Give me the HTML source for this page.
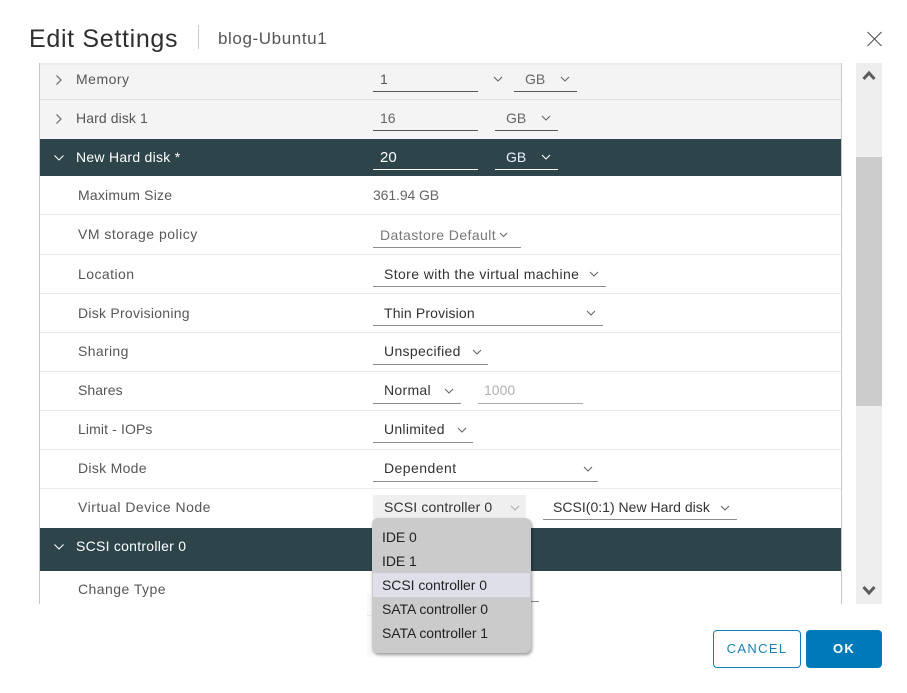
<!DOCTYPE html>
<html><head><meta charset="utf-8"><style>
html,body{margin:0;padding:0;width:907px;height:693px;overflow:hidden;background:#fff}
body{position:relative;font-family:"Liberation Sans",sans-serif;font-size:14px;color:#565656}
.a,.t,.l,.u,svg{position:absolute}
.t{white-space:nowrap;line-height:18px;height:18px}
.u{height:1px;background:#8c8c8c}
.l{left:40px;width:801px;height:1px;background:#eaeaea}
.w{color:#fff}
.d{color:#333}
svg.c{width:12px;height:8px;fill:none;stroke:#666;stroke-width:1.1}
svg.c.w2{stroke:#fff}
.m{font-size:14px;color:#222;left:382px;letter-spacing:-.05px}
</style></head><body>
<div class="t" style="left:29px;top:24px;font-size:25px;line-height:30px;height:30px;color:#2f2f2f;letter-spacing:.68px">Edit Settings</div>
<div class="a" style="left:198px;top:25px;width:1px;height:24px;background:#ccc"></div>
<div class="t" style="left:218px;top:29px;font-size:17px;line-height:20px;height:20px;color:#565656;letter-spacing:.6px">blog-Ubuntu1</div>
<svg style="left:866px;top:31px" width="17" height="16"><path d="M1.5 1L15.5 15M15.5 1L1.5 15" stroke="#555" stroke-width="1.1" fill="none"/></svg>

<div class="a" style="left:39px;top:63px;width:1px;height:541px;background:#c8c8c8"></div>
<div class="a" style="left:841px;top:63px;width:1px;height:541px;background:#c8c8c8"></div>
<div class="a" style="left:40px;top:63px;width:801px;height:2px;background:#ececec"></div>
<div class="a" style="left:40px;top:65px;width:801px;height:34px;background:#f4f4f4"></div>
<div class="a" style="left:40px;top:99px;width:801px;height:1px;background:#e2e2e2"></div>
<div class="a" style="left:40px;top:100px;width:801px;height:39px;background:#f4f4f4"></div>
<div class="a" style="left:40px;top:139px;width:801px;height:37px;background:#2d444b"></div>
<div class="a" style="left:40px;top:528px;width:801px;height:43px;background:#2d444b"></div>
<div class="l" style="top:214px"></div><div class="l" style="top:254px"></div><div class="l" style="top:293px"></div><div class="l" style="top:332px"></div><div class="l" style="top:371px"></div><div class="l" style="top:410px"></div><div class="l" style="top:449px"></div><div class="l" style="top:488px"></div>

<!-- scrollbar -->
<div class="a" style="left:856px;top:63px;width:26px;height:541px;background:#eee"></div>
<div class="a" style="left:856px;top:157px;width:26px;height:249px;background:#ccc"></div>
<svg style="left:862px;top:69px" width="14" height="12"><path d="M1.5 10L7 4L12.5 10" fill="none" stroke="#5c5c5c" stroke-width="3"/></svg>
<svg style="left:862px;top:585px" width="14" height="12"><path d="M1.5 2L7 8L12.5 2" fill="none" stroke="#5c5c5c" stroke-width="3"/></svg>

<!-- left arrows -->
<svg style="left:55px;top:74px" width="8" height="12"><path d="M1.5 1.5L6 6L1.5 10.5" fill="none" stroke="#777" stroke-width="1.3"/></svg>
<svg style="left:55px;top:113px" width="8" height="12"><path d="M1.5 1.5L6 6L1.5 10.5" fill="none" stroke="#777" stroke-width="1.3"/></svg>
<svg class="c w2" style="left:53px;top:154px" viewBox="0 0 12 8"><path d="M1.5 1.5L6 6L10.5 1.5"/></svg>
<svg class="c w2" style="left:53px;top:543px" viewBox="0 0 12 8"><path d="M1.5 1.5L6 6L10.5 1.5"/></svg>

<div class="t" style="left:76px;top:70px;letter-spacing:.5px">Memory</div>
<div class="t" style="left:76px;top:109px;letter-spacing:.1px">Hard disk 1</div>
<div class="t w" style="left:76px;top:148px;letter-spacing:.27px">New Hard disk *</div>
<div class="t w" style="left:76px;top:537px;letter-spacing:.26px">SCSI controller 0</div>
<div class="t" style="left:78px;top:186px;letter-spacing:.2px">Maximum Size</div>
<div class="t" style="left:78px;top:225px;letter-spacing:.5px">VM storage policy</div>
<div class="t" style="left:78px;top:265px;letter-spacing:.45px">Location</div>
<div class="t" style="left:78px;top:304px;letter-spacing:.26px">Disk Provisioning</div>
<div class="t" style="left:78px;top:342px;letter-spacing:.35px">Sharing</div>
<div class="t" style="left:78px;top:381px;letter-spacing:.05px">Shares</div>
<div class="t" style="left:78px;top:420px;letter-spacing:.12px">Limit - IOPs</div>
<div class="t" style="left:78px;top:459px;letter-spacing:.3px">Disk Mode</div>
<div class="t" style="left:78px;top:498px;letter-spacing:.5px">Virtual Device Node</div>
<div class="t" style="left:78px;top:580px;letter-spacing:.45px">Change Type</div>

<!-- Memory row controls -->
<div class="t" style="left:380px;top:70px">1</div>
<div class="u" style="left:373px;top:91px;width:105px;background:#555"></div>
<svg class="c" style="left:492px;top:75px" viewBox="0 0 12 8"><path d="M2 2L6 6L10 2"/></svg>
<div class="t" style="left:525px;top:70px;color:#666">GB</div>
<svg class="c" style="left:559px;top:75px" viewBox="0 0 12 8"><path d="M2 2L6 6L10 2"/></svg>
<div class="u" style="left:514px;top:91px;width:63px;background:#555"></div>

<div class="t" style="left:380px;top:109px;color:#666">16</div>
<div class="u" style="left:373px;top:130px;width:105px;background:#555"></div>
<div class="t" style="left:506px;top:109px;color:#666">GB</div>
<svg class="c" style="left:540px;top:114px" viewBox="0 0 12 8"><path d="M2 2L6 6L10 2"/></svg>
<div class="u" style="left:495px;top:130px;width:63px;background:#555"></div>

<div class="t w" style="left:380px;top:149px;font-size:15px">20</div>
<div class="u" style="left:373px;top:169px;width:105px;background:#fff"></div>
<div class="t" style="left:506px;top:148px;color:#eef">GB</div>
<svg class="c w2" style="left:540px;top:153px" viewBox="0 0 12 8"><path d="M2 2L6 6L10 2"/></svg>
<div class="u" style="left:495px;top:169px;width:63px;background:#fff"></div>

<div class="t" style="left:373px;top:186px;color:#666;letter-spacing:-.1px">361.94 GB</div>

<div class="t" style="left:380px;top:226px;color:#777;letter-spacing:.42px">Datastore Default</div>
<svg class="a" style="left:499px;top:232px" width="9" height="6"><path d="M1 1L4.5 4.5L8 1" fill="none" stroke="#666" stroke-width="1.1"/></svg>
<div class="u" style="left:373px;top:247px;width:148px"></div>

<div class="t d" style="left:384px;top:265px;letter-spacing:.39px">Store with the virtual machine</div>
<svg class="c" style="left:588px;top:270px" viewBox="0 0 12 8"><path d="M2 2L6 6L10 2"/></svg>
<div class="u" style="left:373px;top:286px;width:233px"></div>

<div class="t d" style="left:384px;top:304px;letter-spacing:.15px">Thin Provision</div>
<svg class="c" style="left:585px;top:309px" viewBox="0 0 12 8"><path d="M2 2L6 6L10 2"/></svg>
<div class="u" style="left:373px;top:325px;width:230px"></div>

<div class="t d" style="left:384px;top:342px;letter-spacing:.33px">Unspecified</div>
<svg class="c" style="left:471px;top:348px" viewBox="0 0 12 8"><path d="M2 2L6 6L10 2"/></svg>
<div class="u" style="left:373px;top:364px;width:115px"></div>

<div class="t d" style="left:384px;top:381px;letter-spacing:.3px">Normal</div>
<svg class="c" style="left:443px;top:387px" viewBox="0 0 12 8"><path d="M2 2L6 6L10 2"/></svg>
<div class="u" style="left:373px;top:403px;width:88px"></div>
<div class="t" style="left:484px;top:381px;color:#b0b0b0">1000</div>
<div class="u" style="left:478px;top:403px;width:105px;background:#aaa"></div>

<div class="t d" style="left:384px;top:420px;letter-spacing:.27px">Unlimited</div>
<svg class="c" style="left:456px;top:426px" viewBox="0 0 12 8"><path d="M2 2L6 6L10 2"/></svg>
<div class="u" style="left:373px;top:442px;width:100px"></div>

<div class="t d" style="left:384px;top:459px;letter-spacing:.45px">Dependent</div>
<svg class="c" style="left:582px;top:465px" viewBox="0 0 12 8"><path d="M2 2L6 6L10 2"/></svg>
<div class="u" style="left:373px;top:481px;width:225px"></div>

<div class="a" style="left:373px;top:495px;width:153px;height:25px;background:#efefef"></div>
<div class="t d" style="left:384px;top:498px;letter-spacing:.15px">SCSI controller 0</div>
<svg class="c" style="left:509px;top:504px" viewBox="0 0 12 8"><path d="M2 2L6 6L10 2" stroke="#aaa"/></svg>

<div class="t d" style="left:553px;top:498px;letter-spacing:.02px">SCSI(0:1) New Hard disk</div>
<svg class="c" style="left:719px;top:504px" viewBox="0 0 12 8"><path d="M2 2L6 6L10 2"/></svg>
<div class="u" style="left:543px;top:519px;width:194px"></div>

<!-- behind-dropdown fragments -->
<div class="a" style="left:367px;top:594px;width:6px;height:63px;background:#f8f8f8"></div>
<div class="a" style="left:367px;top:615px;width:6px;height:1px;background:#e6e6e6"></div>
<div class="u" style="left:530px;top:601px;width:9px"></div>

<!-- dropdown -->
<div class="a" style="left:372px;top:518px;width:159px;height:135px;background:#cbcbcb;border-radius:6px;box-shadow:1px 2px 3px rgba(0,0,0,.4)"></div>
<div class="a" style="left:373px;top:573px;width:157px;height:24px;background:#dfdfe9"></div>
<div class="t m" style="top:528px">IDE 0</div>
<div class="t m" style="top:552px">IDE 1</div>
<div class="t m" style="top:576px">SCSI controller 0</div>
<div class="t m" style="top:600px">SATA controller 0</div>
<div class="t m" style="top:624px">SATA controller 1</div>

<!-- buttons -->
<div class="a" style="left:713px;top:630px;width:86px;height:36px;border:1px solid #0b7fb8;border-radius:4px;background:#fff;text-align:center;line-height:36px;font-size:13px;letter-spacing:1.35px;color:#1a7fb3">CANCEL</div>
<div class="a" style="left:806px;top:630px;width:76px;height:38px;border-radius:4px;background:#0079b8;text-align:center;line-height:38px;font-size:13px;letter-spacing:1.3px;color:#fff;font-weight:700">OK</div>
</body></html>
